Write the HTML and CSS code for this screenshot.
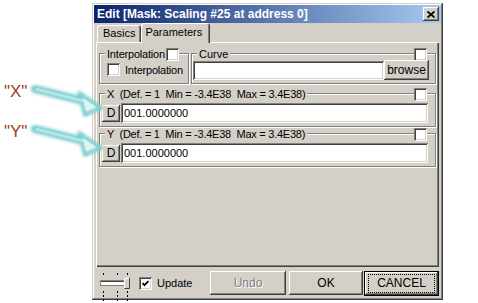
FILE: index.html
```html
<!DOCTYPE html>
<html lang="en">
<head>
    <meta charset="UTF-8">
    <meta name="viewport" content="width=device-width, initial-scale=1.0">
    <title>Edit Mask</title>
    <link rel="stylesheet" href="styles.css">
</head>
<body>
    <div class="stage">
        <svg class="notes" width="110" height="170" viewBox="0 0 110 170">
            <defs>
                <filter id="glow" x="-20%" y="-40%" width="140%" height="180%">
                    <feGaussianBlur stdDeviation="1.8"/>
                </filter>
                <g id="arrow">
                    <g filter="url(#glow)">
                        <line x1="35" y1="89" x2="84" y2="101" stroke="#7fcfcf" stroke-width="8" stroke-linecap="round"/>
                        <polygon points="79,93 101,108 85,115" fill="#c2eaea" stroke="#7fcfcf" stroke-width="4" stroke-linejoin="round"/>
                    </g>
                    <line x1="37" y1="89.5" x2="82" y2="100.5" stroke="#b4e6e6" stroke-width="3" stroke-linecap="round"/>
                    <polygon points="83,98 96,107 86,111" fill="#dcf4f4"/>
                </g>
            </defs>
            <use href="#arrow"/>
            <use href="#arrow" y="40"/>
            <text class="note-label" x="4" y="97">"X"</text>
            <text class="note-label" x="4" y="137">"Y"</text>
        </svg>

        <div class="dialog">
            <div class="titlebar">
                <span class="title">Edit [Mask: Scaling #25 at address 0]</span>
                <span class="close raised">
                    <svg width="8" height="7" viewBox="0 0 8 7"><path d="M0.5 0.5 L7.5 6.5 M7.5 0.5 L0.5 6.5" stroke="#000" stroke-width="1.8"/></svg>
                </span>
            </div>

            <div class="tabs">
                <div class="tab">Basics</div>
                <div class="tab active">Parameters</div>
            </div>

            <div class="panel">
                <div class="row-top">
                    <div class="group interp">
                        <div class="legend">
                            <span class="legend-text">Interpolation</span>
                            <span class="check"></span>
                        </div>
                        <div class="option">
                            <span class="check"></span>
                            <span class="option-text">Interpolation</span>
                        </div>
                    </div>
                    <div class="group curve">
                        <div class="legend">
                            <span class="legend-text">Curve</span>
                            <span class="spacer"></span>
                            <span class="check"></span>
                        </div>
                        <div class="field-row">
                            <div class="field wide"></div>
                            <div class="btn raised browse">browse</div>
                        </div>
                    </div>
                </div>

                <div class="group param">
                    <div class="legend">
                        <span class="legend-text range">X  (Def. = 1  Min = -3.4E38  Max = 3.4E38)</span>
                        <span class="spacer"></span>
                        <span class="check"></span>
                    </div>
                    <div class="value-row">
                        <div class="btn raised dflt">D</div>
                        <div class="field value">001.0000000</div>
                    </div>
                </div>

                <div class="group param second">
                    <div class="legend">
                        <span class="legend-text range">Y  (Def. = 1  Min = -3.4E38  Max = 3.4E38)</span>
                        <span class="spacer"></span>
                        <span class="check"></span>
                    </div>
                    <div class="value-row">
                        <div class="btn raised dflt">D</div>
                        <div class="field value">001.0000000</div>
                    </div>
                </div>
            </div>

            <div class="footer">
                <svg class="slider" width="34" height="29" viewBox="0 0 34 29">
                    <g stroke="#000" stroke-width="1" stroke-dasharray="2 2">
                        <line x1="6.5" y1="1" x2="6.5" y2="5"/>
                        <line x1="20.5" y1="1" x2="20.5" y2="5"/>
                        <line x1="30.5" y1="1" x2="30.5" y2="5"/>
                        <line x1="6.5" y1="19" x2="6.5" y2="29"/>
                        <line x1="20.5" y1="19" x2="20.5" y2="29"/>
                        <line x1="30.5" y1="19" x2="30.5" y2="29"/>
                    </g>
                    <rect x="3.5" y="8.5" width="27" height="5" fill="#fff" stroke="#808080"/>
                    <line x1="4" y1="9.5" x2="30" y2="9.5" stroke="#404040"/>
                    <rect x="27" y="6" width="6" height="11" fill="#d4d0c8"/>
                    <path d="M27.5 16.5 V6.5 H32.5" fill="none" stroke="#fff"/>
                    <path d="M27.5 16.5 H32.5 V6" fill="none" stroke="#404040"/>
                </svg>
                <span class="check checked">
                    <svg width="7" height="7" viewBox="0 0 7 7"><polyline points="0.5,3 2.5,5.2 6.5,1" fill="none" stroke="#000" stroke-width="1.8"/></svg>
                </span>
                <span class="update-text">Update</span>

                <div class="buttons">
                    <div class="btn raised push undo">Undo</div>
                    <div class="btn raised push ok">OK</div>
                    <div class="btn raised push cancel"><span class="focus">CANCEL</span></div>
                </div>
            </div>
        </div>
    </div>
</body>
</html>
```

FILE: styles.css
```css
:root {
    --face: #d4d0c8;
    --shadow: #808080;
    --dark: #404040;
}
* {
    box-sizing: border-box;
}
body {
    margin: 0;
    background: #fff;
    font-family: "Liberation Sans", Arial, sans-serif;
    font-size: 11px;
    color: #000;
}
.stage {
    position: relative;
    width: 478px;
    height: 303px;
    overflow: hidden;
    padding: 3px 0 0 92px;
}
.notes {
    position: absolute;
    left: 0;
    top: 0;
    z-index: 2;
}
.note-label {
    font-family: "Liberation Sans", Arial, sans-serif;
    font-size: 17px;
    fill: #9c401a;
}
.raised {
    background: var(--face);
    box-shadow: inset -1px -1px var(--dark), inset 1px 1px #fff, inset -2px -2px var(--shadow), inset 2px 2px var(--face);
}
.dialog {
    width: 351px;
    height: 297px;
    padding: 2px;
    background: var(--face);
    box-shadow: inset -1px -1px var(--dark), inset 1px 1px var(--face), inset -2px -2px var(--shadow), inset 2px 2px #fff;
    display: flex;
    flex-direction: column;
}
.titlebar {
    height: 18px;
    background: linear-gradient(to right, #0a246a, #a6caf0);
    display: flex;
    align-items: center;
    padding: 0 2px 0 3px;
}
.title {
    flex: 1;
    color: #fff;
    font-weight: bold;
    font-size: 12px;
    white-space: nowrap;
}
.close {
    width: 16px;
    height: 14px;
    display: flex;
    align-items: center;
    justify-content: center;
}
.tabs {
    height: 19px;
    display: flex;
    align-items: flex-end;
    padding-left: 3px;
}
.tab {
    height: 17px;
    padding: 2px 6px 0 6px;
    border-radius: 3px 3px 0 0;
    box-shadow: inset 1px 1px #fff, inset -1px 0 var(--dark), inset -2px 0 var(--shadow);
    background: var(--face);
}
.tab.active {
    position: relative;
    z-index: 1;
    width: 69px;
    height: 20px;
    margin-bottom: -1px;
    padding: 3px 0 0 4px;
}
.panel {
    height: 225px;
    margin: 0 2px;
    padding: 5px 3px 0 3px;
    box-shadow: inset 1px 1px #fff, inset -1px -1px var(--dark), inset -2px -2px var(--shadow);
}
.row-top {
    display: flex;
}
.group {
    margin-top: 6px;
    border: 1px solid var(--shadow);
    box-shadow: inset 1px 1px #fff, 1px 1px #fff;
}
.row-top .group {
    height: 31px;
}
.interp {
    width: 90px;
}
.curve {
    flex: 1;
    margin-left: 2px;
}
.legend {
    height: 13px;
    margin-top: -6px;
    display: flex;
    align-items: center;
    padding: 0 8px 0 5px;
}
.legend-text {
    background: var(--face);
    padding: 0 2px;
    white-space: pre;
    line-height: 13px;
}
.interp .legend-text {
    letter-spacing: -0.2px;
}
.legend-text.range {
    letter-spacing: -0.25px;
}
.spacer {
    flex: 1;
}
.check {
    width: 13px;
    height: 13px;
    flex: none;
    background: #fff;
    box-shadow: inset 1px 1px var(--shadow), inset -1px -1px #fff, inset 2px 2px var(--dark), inset -2px -2px var(--face);
    display: flex;
    align-items: center;
    justify-content: center;
}
.interp .legend .check {
    margin-left: -1px;
}
.option {
    display: flex;
    align-items: center;
    margin-top: 2px;
    padding-left: 7px;
}
.option-text {
    margin-left: 5px;
    letter-spacing: -0.2px;
}
.field {
    background: #fff;
    box-shadow: inset 1px 1px var(--shadow), inset -1px -1px #fff, inset 2px 2px var(--dark), inset -2px -2px var(--face);
    padding: 3px 0 0 3px;
    white-space: nowrap;
}
.field-row {
    display: flex;
    align-items: flex-start;
    margin-top: -1px;
    padding: 0 6px 0 1px;
}
.field.wide {
    flex: 1;
    height: 19px;
    margin-top: 1px;
}
.btn {
    display: flex;
    align-items: center;
    justify-content: center;
}
.browse {
    width: 45px;
    height: 20px;
    font-size: 12px;
}
.param {
    height: 34px;
    margin-top: 9px;
}
.param.second {
    margin-top: 6px;
}
.value-row {
    display: flex;
    align-items: center;
    margin-top: 2px;
    padding: 0 7px 0 2px;
}
.dflt {
    width: 18px;
    height: 17px;
    font-size: 12px;
}
.field.value {
    flex: 1;
    height: 20px;
    margin-left: 1px;
    padding-top: 4px;
}
.footer {
    height: 24px;
    margin-top: 4px;
    display: flex;
    align-items: center;
    padding: 0 2px 0 3px;
}
.slider {
    align-self: flex-start;
    margin-top: 1px;
}
.checked {
    margin-left: 8px;
}
.update-text {
    margin-left: 5px;
}
.buttons {
    margin-left: auto;
    display: flex;
}
.push {
    height: 24px;
    font-size: 12px;
}
.undo {
    width: 76px;
    margin-right: 3px;
    color: var(--shadow);
    text-shadow: 1px 1px #fff;
}
.ok {
    width: 74px;
    margin-right: 1px;
}
.cancel {
    width: 75px;
    height: 25px;
    border: 1px solid #000;
}
.focus {
    width: 67px;
    height: 19px;
    border: 1px dotted #000;
    display: flex;
    align-items: center;
    justify-content: center;
}
```
